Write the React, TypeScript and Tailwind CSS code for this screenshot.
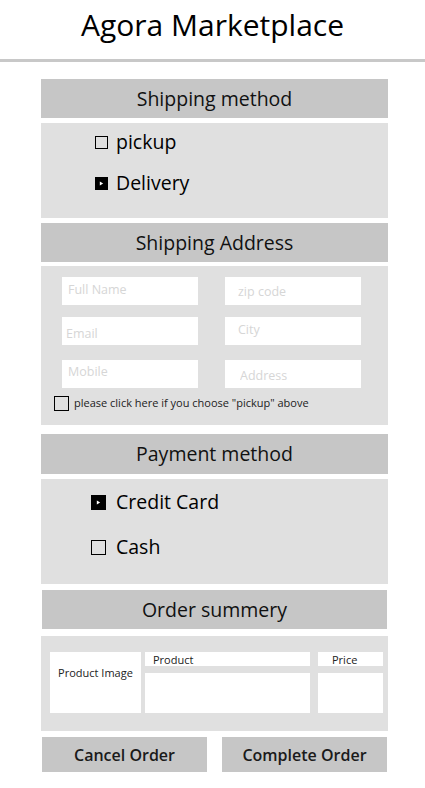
import { useState } from 'react'

const font = { fontFamily: '"Open Sans", Lato, sans-serif' }

function SectionHeader({ title, className = '' }: { title: string; className?: string }) {
  return (
    <div className={`flex h-[39px] items-center justify-center bg-[#c6c6c6] text-[19.5px] text-[#111] ${className}`}>
      {title}
    </div>
  )
}

/** Checked boxes render as a black square with a small play-style marker. */
function Box({ checked, size = 13 }: { checked: boolean; size?: number }) {
  if (checked) {
    return (
      <span className="flex shrink-0 items-center justify-center bg-black" style={{ width: size, height: size }}>
        <svg viewBox="0 0 6 6" width="5" height="5" aria-hidden="true">
          <path d="M1 0.5L5 3L1 5.5z" fill="#fff" />
        </svg>
      </span>
    )
  }
  return <span className="shrink-0 border border-black" style={{ width: size, height: size }} />
}

function Field({ placeholder, pad }: { placeholder: string; pad: string }) {
  return (
    <input
      placeholder={placeholder}
      className={`h-[28px] w-[136px] bg-white text-[12.5px] outline-none placeholder:text-[#d6d6d6] ${pad}`}
      style={font}
    />
  )
}

export default function App() {
  const [shipping, setShipping] = useState<'pickup' | 'delivery'>('delivery')
  const [payment, setPayment] = useState<'card' | 'cash'>('card')
  const [skipAddress, setSkipAddress] = useState(false)

  return (
    <div className="min-h-[788px] w-[425px] bg-white text-black" style={font}>
      <header className="flex h-[62px] items-center justify-center border-b-[3px] border-[#c8c8c8] pb-[19px] pt-[8px] text-[30px]">
        Agora Marketplace
      </header>

      <div className="ml-[41px] mt-[17px] flex w-[347px] flex-col">
        <SectionHeader title="Shipping method" />
        <div className="mt-[5px] flex h-[95px] flex-col gap-[15px] bg-[#e0e0e0] pl-[54px] pt-[6px]">
          <button type="button" className="flex h-[26px] items-center gap-[8px] text-[19.5px]" onClick={() => setShipping('pickup')}>
            <Box checked={shipping === 'pickup'} />
            pickup
          </button>
          <button type="button" className="flex h-[26px] items-center gap-[8px] text-[19.5px]" onClick={() => setShipping('delivery')}>
            <Box checked={shipping === 'delivery'} />
            Delivery
          </button>
        </div>

        <SectionHeader title="Shipping Address" className="mt-[5px] h-[38px]" />
        <div className="mt-[4px] flex h-[159px] flex-col bg-[#e0e0e0] pt-[11px]">
          <div className="grid grid-cols-[136px_136px] gap-x-[27px] gap-y-[12px] pl-[21px]">
            <Field placeholder="Full Name" pad="pl-[6px] pb-[3px]" />
            <Field placeholder="zip code" pad="pl-[13px]" />
            <Field placeholder="Email" pad="pl-[4px] pt-[5px]" />
            <Field placeholder="City" pad="pl-[13px] pb-[4px]" />
            <div className="col-span-2 -mt-[2px] grid grid-cols-[136px_136px] gap-x-[27px] pt-[5px]">
              <Field placeholder="Mobile" pad="pl-[6px] pb-[6px]" />
              <Field placeholder="Address" pad="pl-[15px] pt-[2px]" />
            </div>
          </div>
          <button
            type="button"
            className="ml-[13px] mt-[7px] flex items-center gap-[5px] text-[11px] text-[#222]"
            onClick={() => setSkipAddress((v) => !v)}
          >
            <span className={`h-[15px] w-[15px] border border-black ${skipAddress ? 'bg-black' : ''}`} />
            please click here if you choose "pickup" above
          </button>
        </div>

        <SectionHeader title="Payment method" className="mt-[9px] h-[40px]" />
        <div className="mt-[5px] flex h-[105px] flex-col gap-[19px] bg-[#e0e0e0] pl-[50px] pt-[10px]">
          <button type="button" className="flex h-[26px] items-center gap-[10px] text-[19.5px]" onClick={() => setPayment('card')}>
            <Box checked={payment === 'card'} size={15} />
            Credit Card
          </button>
          <button type="button" className="flex h-[26px] items-center gap-[10px] text-[19.5px]" onClick={() => setPayment('cash')}>
            <Box checked={payment === 'cash'} size={15} />
            Cash
          </button>
        </div>

        <SectionHeader title="Order summery" className="ml-[1px] mr-[1px] mt-[6px]" />
        <div className="mt-[7px] flex h-[95px] gap-[4px] bg-[#e0e0e0] pl-[9px] pt-[16px]">
          <div className="flex h-[61px] w-[91px] items-start justify-center bg-white pt-[13px] text-[11px] text-[#222]">
            Product Image
          </div>
          <div className="flex w-[165px] flex-col gap-[7px]">
            <div className="h-[14px] bg-white pl-[8px] text-[11px] leading-[16px] text-[#222]">Product</div>
            <div className="h-[40px] bg-white" />
          </div>
          <div className="ml-[4px] flex w-[65px] flex-col gap-[7px]">
            <div className="h-[14px] bg-white pl-[14px] text-[11px] leading-[16px] text-[#222]">Price</div>
            <div className="h-[40px] bg-white" />
          </div>
        </div>

        <div className="mt-[6px] flex justify-between pl-[1px] pr-[1px]">
          <button type="button" className="h-[35px] w-[165px] bg-[#c6c6c6] text-[16px] font-semibold text-[#1a1a1a]">
            Cancel Order
          </button>
          <button type="button" className="h-[35px] w-[165px] bg-[#c6c6c6] text-[16px] font-semibold text-[#1a1a1a]">
            Complete Order
          </button>
        </div>
      </div>
    </div>
  )
}
